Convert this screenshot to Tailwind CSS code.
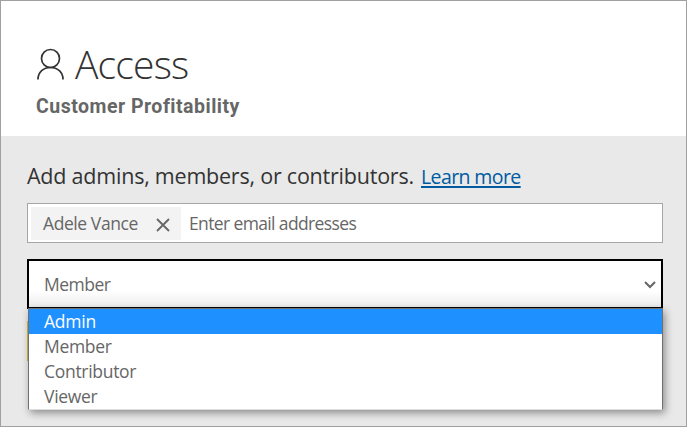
<!DOCTYPE html>
<html lang="en">
<head>
<meta charset="utf-8">
<title>Access</title>
<script src="https://cdn.jsdelivr.net/npm/@tailwindcss/browser@4"></script>
</head>
<body class="overflow-hidden font-['Open_Sans','Noto_Sans',sans-serif] text-[#666]">
<div class="flex h-[427px] w-[687px] flex-col border border-[#a0a0a0] bg-[#e9e9e9]">
  <header class="h-[135px] shrink-0 bg-white pt-[36px] pl-[35px]">
    <div class="flex h-[54px] items-center text-[#333]">
      <svg class="h-[32px] w-[28px]" viewBox="0 0 28 32" fill="none" stroke="currentColor" stroke-width="1.7"><circle cx="14.5" cy="10.5" r="9"/><path d="M2 31.5C2 24 7.5 19.5 14.5 19.5S27 24 27 31.5"/></svg>
      <h1 class="ml-[11px] text-[39px] leading-[54px] font-[330] tracking-[-0.8px] whitespace-nowrap">Access</h1>
    </div>
    <h2 class="mt-[4px] font-['Roboto',sans-serif] text-[19.5px] leading-[24px] font-bold tracking-[0.5px] whitespace-nowrap">Customer Profitability</h2>
  </header>
  <main class="flex flex-col pt-[25px] pr-[23px] pl-[26px]">
    <div class="flex h-[30px] items-baseline whitespace-nowrap text-[#333]">
      <p class="w-[394px] text-[21.5px] leading-[30px] tracking-[-0.22px]">Add admins, members, or contributors.</p>
      <a class="text-[19.5px] leading-[30px] tracking-[-0.6px] text-[#005ba1] underline decoration-2 underline-offset-2" href="#">Learn more</a>
    </div>
    <div class="mt-[12px] flex h-[40px] items-center border border-[#a6a6a6] bg-white pl-[3px] text-[17.5px] whitespace-nowrap">
      <div class="flex h-[33px] w-[150px] items-center bg-[#f3f3f3] pl-[12px]">
        <span class="w-[113px] leading-[33px] tracking-[-0.42px]">Adele Vance</span>
        <svg class="mt-[3px] size-[14px]" viewBox="0 0 14 14" fill="none" stroke="currentColor" stroke-width="1.8"><path d="M1 1l12 12M13 1L1 13"/></svg>
      </div>
      <span class="ml-[8px] leading-[34px] tracking-[-0.63px]">Enter email addresses</span>
    </div>
    <div class="relative mt-[16px] flex h-[50px] items-center justify-between border-2 border-black bg-white bg-linear-to-b from-white from-65% to-[#ececec] pr-[4px] pl-[15px] text-[17.5px]">
      <span class="tracking-[-0.5px]">Member</span>
      <svg class="mt-[2px] h-[8px] w-[14px]" viewBox="0 0 14 8" fill="none" stroke="currentColor" stroke-width="2"><path d="M2 1l5 5 5-5"/></svg>
      <ul class="absolute top-[47px] -left-px h-[102px] w-[635px] border border-[#707070] border-b-[#ddd] bg-white text-[17.5px] leading-[25px] tracking-[-0.3px] shadow-[2px_3px_8px_rgba(0,0,0,0.4)]">
        <li class="h-[25px] bg-[#1e90ff] pl-[15px] tracking-[-0.2px] text-white">Admin</li>
        <li class="h-[25px] pl-[15px]">Member</li>
        <li class="h-[25px] pl-[15px]">Contributor</li>
        <li class="h-[25px] pl-[15px]">Viewer</li>
      </ul>
    </div>
    <div class="mt-[12px] h-[40px] w-px bg-[#d8b84a]"></div>
  </main>
</div>
</body>
</html>
